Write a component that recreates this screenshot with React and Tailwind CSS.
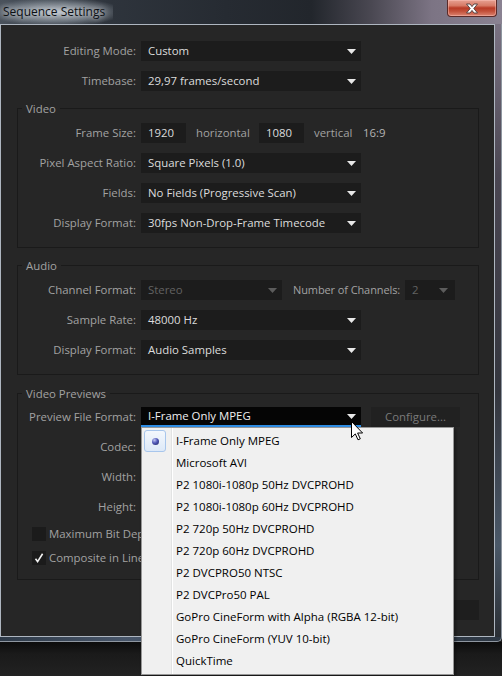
import React from 'react';

function Arrow({ disabled }) {
  return (
    <svg width="9" height="5" viewBox="0 0 9 5" className="shrink-0">
      <path d="M0 0H9L4.5 5Z" fill={disabled ? '#5c5c5c' : '#e8e8e8'} />
    </svg>
  );
}

function Select({ value, wide = 'w-[220px]', disabled = false }) {
  return (
    <div className={`${wide} h-[20px] bg-[#1c1c1c] pl-[7px] pr-[5px] flex items-center justify-between`}>
      <span className={disabled ? 'text-[#626262]' : 'text-[#dcdcdc]'}>{value}</span>
      <Arrow disabled={disabled} />
    </div>
  );
}

function Row({ label, lw, children }) {
  return (
    <div className="flex items-center h-[20px]">
      <div className={`${lw} shrink-0 text-right text-[#a2a2a2] whitespace-nowrap`}>{label}</div>
      <div className="ml-[5px] flex items-center">{children}</div>
    </div>
  );
}

function Legend({ children }) {
  return (
    <div className="-mt-[8px] ml-[4px] w-fit px-[4px] h-[15px] leading-[15px] bg-[#262626] text-[#a2a2a2]">
      {children}
    </div>
  );
}

function Box({ checked }) {
  return (
    <div className="w-[14px] h-[14px] bg-[#1b1b1b] flex items-center justify-center shrink-0">
      {checked && (
        <svg width="12" height="12" viewBox="0 0 12 12">
          <path d="M2.5 6.8L4.6 9.6L9.6 1.8" fill="none" stroke="#f2f2f2" strokeWidth="1.6" />
        </svg>
      )}
    </div>
  );
}

const items = [
  'I-Frame Only MPEG',
  'Microsoft AVI',
  'P2 1080i-1080p 50Hz DVCPROHD',
  'P2 1080i-1080p 60Hz DVCPROHD',
  'P2 720p 50Hz DVCPROHD',
  'P2 720p 60Hz DVCPROHD',
  'P2 DVCPRO50 NTSC',
  'P2 DVCPro50 PAL',
  'GoPro CineForm with Alpha (RGBA 12-bit)',
  'GoPro CineForm (YUV 10-bit)',
  'QuickTime',
];

export default function App() {
  const lwTop = 'w-[135px]';
  const lwG = 'w-[118px]';
  return (
    <div className="relative w-[502px] h-[676px] overflow-hidden bg-[#1f1f1f] font-['Open_Sans','Noto_Sans',sans-serif] text-[11.4px] leading-[20px]">
      {/* window */}
      <div className="h-[642px] flex flex-col bg-[linear-gradient(180deg,#5e5a68_0%,#3a3e48_20%,#2c3038_60%,#3a4656_90%,#2a3038_100%)] rounded-br-[6px]">
        {/* title bar */}
        <div className="h-[24px] flex items-start justify-between bg-[linear-gradient(90deg,#4a525c_0%,#2e343c_22%,#262b32_45%,#22262c_62%,#4a4852_74%,#7c7484_86%,#8a8292_100%)]">
          <div className="h-[24px] pl-[3px] pr-[8px] flex items-center bg-[radial-gradient(ellipse_at_center,rgba(215,222,230,0.8)_0%,rgba(180,190,200,0.4)_55%,transparent_85%)]">
            <span className="text-[12px] text-[#0c1014] [text-shadow:0_0_6px_rgba(255,255,255,0.9)]">Sequence Settings</span>
          </div>
          <div className="mr-[5px] w-[50px] h-[17px] rounded-b-[4px] border border-t-0 border-[#5a2a28] shadow-[inset_0_0_0_1px_rgba(255,200,190,0.45)] bg-[linear-gradient(180deg,#e6a092_0%,#d77a66_35%,#b83a26_50%,#c2503a_70%,#dc8470_100%)] flex items-center justify-center">
            <svg width="14" height="11" viewBox="0 0 14 11">
              <path d="M1.5 1H5L7 3.6L9 1H12.5L8.8 5.5L12.5 10H9L7 7.4L5 10H1.5L5.2 5.5Z" fill="#ffffff" stroke="#4a3a3a" strokeWidth="0.9" strokeLinejoin="round" />
            </svg>
          </div>
        </div>

        <div className="flex">
          {/* panel */}
          <div className="w-[495px] h-[613px] shrink-0 border border-[#aeb6c0] bg-[#262626] pt-[16px] flex flex-col">
            <div className="flex flex-col gap-[10px]">
              <Row label="Editing Mode:" lw={lwTop}><Select value="Custom" /></Row>
              <Row label="Timebase:" lw={lwTop}><Select value="29,97 frames/second" /></Row>
            </div>

            {/* Video */}
            <div className="mt-[17px] ml-[16px] w-[462px] border border-[#1a1a1a]">
              <Legend>Video</Legend>
              <div className="mt-[7px] pb-[14px] flex flex-col gap-[10px]">
                <Row label="Frame Size:" lw={lwG}>
                  <div className="w-[45px] h-[20px] bg-[#1c1c1c] pl-[7px] text-[#dcdcdc]">1920</div>
                  <span className="ml-[10px] w-[63px] text-[#a2a2a2]">horizontal</span>
                  <div className="w-[45px] h-[20px] bg-[#1c1c1c] pl-[7px] text-[#dcdcdc]">1080</div>
                  <span className="ml-[10px] w-[49px] text-[#a2a2a2]">vertical</span>
                  <span className="text-[#b4b4b4]">16:9</span>
                </Row>
                <Row label="Pixel Aspect Ratio:" lw={lwG}><Select value="Square Pixels (1.0)" /></Row>
                <Row label="Fields:" lw={lwG}><Select value="No Fields (Progressive Scan)" /></Row>
                <Row label="Display Format:" lw={lwG}><Select value="30fps Non-Drop-Frame Timecode" /></Row>
              </div>
            </div>

            {/* Audio */}
            <div className="mt-[17px] ml-[16px] w-[462px] border border-[#1a1a1a]">
              <Legend>Audio</Legend>
              <div className="mt-[7px] pb-[14px] flex flex-col gap-[10px]">
                <Row label="Channel Format:" lw={lwG}>
                  <Select value="Stereo" wide="w-[141px]" disabled />
                  <span className="ml-[11px] w-[107px] whitespace-nowrap text-[11px] tracking-[-0.1px] text-[#a2a2a2]">Number of Channels:</span>
                  <div className="ml-[5px]">
                    <div className="w-[50px] h-[20px] bg-[#1c1c1c] pl-[7px] pr-[7px] flex items-center justify-between">
                      <span className="text-[#626262]">2</span>
                      <Arrow disabled />
                    </div>
                  </div>
                </Row>
                <Row label="Sample Rate:" lw={lwG}><Select value="48000 Hz" /></Row>
                <Row label="Display Format:" lw={lwG}><Select value="Audio Samples" /></Row>
              </div>
            </div>

            {/* Video Previews */}
            <div className="mt-[18px] ml-[16px] w-[462px] border border-[#1a1a1a]">
              <Legend>Video Previews</Legend>
              <div className="mt-[6px] pb-[14px] flex flex-col gap-[10px]">
                <Row label="Preview File Format:" lw={lwG}>
                  <div className="w-[220px] h-[20px] bg-[#050505] border-b-2 border-[#2e8de4] pl-[7px] pr-[5px] flex items-center justify-between">
                    <span className="text-[#f0f0f0]">I-Frame Only MPEG</span>
                    <Arrow />
                  </div>
                  <div className="ml-[10px] w-[89px] h-[20px] bg-[#212121] text-[#7a7a7a] text-center">Configure...</div>
                </Row>
                <Row label="Codec:" lw={lwG}><div className="w-[220px] h-[20px] bg-[#1c1c1c]" /></Row>
                <Row label="Width:" lw={lwG}><div className="w-[45px] h-[20px] bg-[#1c1c1c]" /></Row>
                <Row label="Height:" lw={lwG}><div className="w-[45px] h-[20px] bg-[#1c1c1c]" /></Row>
                <div className="h-[14px] ml-[14px] flex items-center">
                  <Box />
                  <span className="ml-[3px] text-[#a2a2a2] whitespace-nowrap">Maximum Bit Depth</span>
                </div>
                <div className="h-[14px] ml-[14px] flex items-center">
                  <Box checked />
                  <span className="ml-[3px] text-[#a2a2a2] whitespace-nowrap">Composite in Linear Color</span>
                </div>
              </div>
            </div>

            {/* buttons (hidden under the open menu) */}
            <div className="mt-[20px] mr-[15px] flex justify-end gap-[10px]">
              <div className="w-[80px] h-[20px] bg-[#1e1e1e]" />
              <div className="w-[80px] h-[20px] bg-[#1e1e1e]" />
            </div>
          </div>
          {/* right frame strip */}
          <div className="flex-1 border-r border-[#8e96a0] bg-[linear-gradient(180deg,#7a7282_0%,#4a4652_25%,#34363e_60%,#4a5868_85%,#2a2e34_100%)]" />
        </div>
        <div className="flex-1 border-t-0 border-b border-r border-[#8e96a0] rounded-br-[6px] bg-[linear-gradient(90deg,#2e3a48,#48566a_25%,#3a4656_50%,#2e3844_100%)]" />
      </div>
      <div className="h-[34px] bg-[linear-gradient(180deg,#0c0c0c_0%,#1a1a1a_35%,#222222_100%)]" />

      {/* dropdown menu */}
      <div className="absolute left-[141px] top-[427px] w-[313px] h-[248px] border border-[#979797] pt-[2px] text-[11.5px] leading-[22px] text-black bg-[linear-gradient(90deg,#f0f0f0_29px,#e2e3e3_29px,#e2e3e3_30px,#ffffff_30px,#ffffff_31px,#f0f0f0_31px)] shadow-[2px_2px_3px_rgba(0,0,0,0.35)]">
        {items.map((t, i) => (
          <div key={t} className="h-[22px] flex items-center">
            <div className="w-[29px] h-[22px] pl-[2px] shrink-0 flex items-center">
              {i === 0 && (
                <div className="w-[22px] h-[22px] rounded-[3px] border border-[#a8c6ec] bg-[linear-gradient(180deg,#f4f8fd,#dde9f8)] flex items-center justify-center">
                  <div className="w-[7px] h-[7px] rounded-full bg-[radial-gradient(circle_at_35%_30%,#c2c6f4_0%,#5058b8_45%,#1a1f5c_100%)]" />
                </div>
              )}
            </div>
            <span className="pl-[5px] whitespace-nowrap">{t}</span>
          </div>
        ))}
      </div>

      {/* mouse cursor */}
      <svg className="absolute left-[351px] top-[421px]" width="13" height="20" viewBox="0 0 13 20">
        <path d="M0.5 0.5V16.5L4.3 12.9L7 18.8L9.3 17.8L6.6 12H11.6Z" fill="#ffffff" stroke="#000000" strokeWidth="1" strokeLinejoin="miter" />
      </svg>
    </div>
  );
}
